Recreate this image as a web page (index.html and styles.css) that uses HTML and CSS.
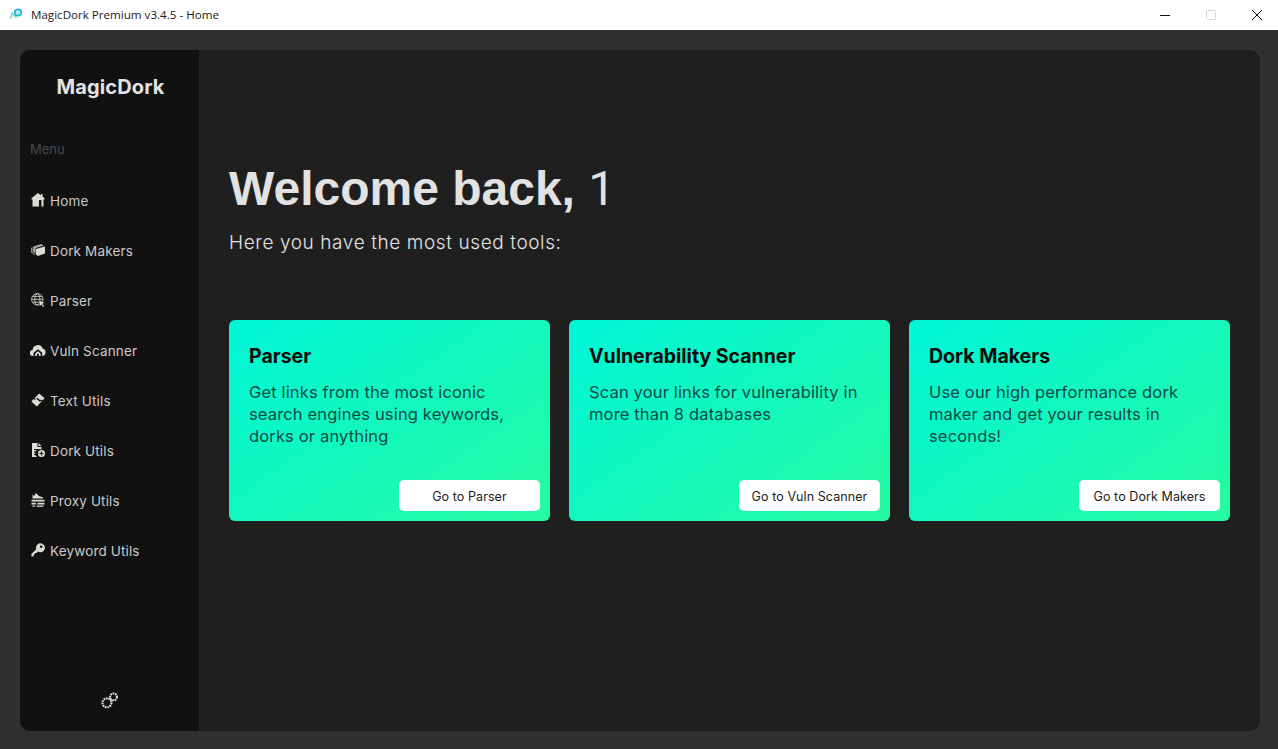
FILE: index.html
```html
<!DOCTYPE html>
<html lang="en">
<head>
    <meta charset="UTF-8">
    <title>MagicDork Premium v3.4.5 - Home</title>
    <link rel="stylesheet" href="styles.css">
</head>
<body>
    <!-- Window title bar -->
    <div class="titlebar">
        <svg class="app-icon" viewBox="0 0 12 12">
            <path d="M.5 11 L2 5 L4 8 L5 4 L6 10" fill="none" stroke="#5fe0cc" stroke-width="1.3"/>
            <circle cx="8" cy="4.5" r="3.2" fill="#bdeef0" stroke="#27b7d0" stroke-width="1.7"/>
        </svg>
        <span class="app-title">MagicDork Premium v3.4.5 - Home</span>
        <div class="window-buttons">
            <svg class="win-btn" viewBox="0 0 12 12"><path d="M1 6.5 H11" stroke="#111" stroke-width="1"/></svg>
            <svg class="win-btn" viewBox="0 0 12 12"><rect x="1.5" y="1.5" width="9" height="9" rx="1" fill="none" stroke="#d8d8cc" stroke-width="1"/></svg>
            <svg class="win-btn" viewBox="0 0 12 12"><path d="M1 1 L11 11 M11 1 L1 11" stroke="#111" stroke-width="1"/></svg>
        </div>
    </div>

    <div class="app">
        <!-- Sidebar -->
        <aside class="sidebar">
            <div class="brand">MagicDork</div>
            <div class="menu-label">Menu</div>
            <nav class="menu">
                <a class="menu-item">
                    <svg class="icon" viewBox="0 0 14 14"><path fill-rule="evenodd" d="M7 0 L10 2.4 V1 H11.5 V3.6 L13.5 5.3 V6.5 H12.5 V13.5 H1.5 V6.5 H.5 V5.3 Z M8 7 V13.5 H10.4 V7 Z"/></svg>
                    <span>Home</span>
                </a>
                <a class="menu-item">
                    <svg class="icon" viewBox="0 0 14 14"><path d="M5 6 L14 3.6 V10.6 L6.8 13 L5 11.4 Z"/><path d="M2.2 3.4 L10.5 1 L12.6 2.8 L4.6 5 V10.8 L2.2 9 Z" opacity=".75"/><path d="M0 4.8 L1.6 4.2 V9.4 L4 11.4 V12.4 L0 9.4 Z" opacity=".6"/></svg>
                    <span>Dork Makers</span>
                </a>
                <a class="menu-item">
                    <svg class="icon icon-line" viewBox="0 0 14 14"><circle cx="6.3" cy="6.3" r="5.7"/><ellipse cx="6.3" cy="6.3" rx="2.5" ry="5.7"/><path d="M.8 6.3 H11.8 M1.6 3.4 H11 M1.6 9.2 H11"/><path class="cursor" d="M7.6 7 L14 9.6 L11.6 10.8 L13.4 13.4 L12 14.4 L10.4 11.8 L8.8 13.6 Z"/></svg>
                    <span>Parser</span>
                </a>
                <a class="menu-item">
                    <svg class="icon icon-wide" viewBox="0 0 16 14"><path d="M3.5 13 H3 A3 3 0 0 1 2.6 7 A5.2 5.2 0 0 1 12.7 5.6 A3.8 3.8 0 0 1 12.6 13 H12.2 V9.8 L8 6.2 L3.5 9.8 Z"/><path fill-rule="evenodd" d="M5.2 13 V10.5 L8 8.3 L10.6 10.5 V13 H8.9 V10.8 H7 V13 Z"/></svg>
                    <span>Vuln Scanner</span>
                </a>
                <a class="menu-item">
                    <svg class="icon" viewBox="0 0 14 14"><path fill-rule="evenodd" d="M8.2 .4 L13.6 5.2 L11.4 7.6 L10 6.4 L9.2 7.2 L10.6 8.4 L5.8 13.4 L.4 8.4 L2.6 6 L4 7.2 L4.8 6.4 L3.4 5.2 Z M6.2 4.4 L9.8 7.8 L8.8 8.8 L5.2 5.4 Z"/></svg>
                    <span>Text Utils</span>
                </a>
                <a class="menu-item">
                    <svg class="icon" viewBox="0 0 14 14"><path d="M1 0 H6.5 V4 H10.5 V6.6 A4.2 4.2 0 0 0 6.2 14 H1 Z M7.5 0 L10.5 3 H7.5 Z"/><path d="M3 6 H7 V7 H3 Z M3 8.5 H6 V9.5 H3 Z M3 11 H5.5 V12 H3 Z" fill="#111"/><circle cx="10.5" cy="10.5" r="3.5"/><path d="M8.5 10.5 H12.5 M10.5 8.5 V12.5" stroke="#111" stroke-width="1.1"/></svg>
                    <span>Dork Utils</span>
                </a>
                <a class="menu-item">
                    <svg class="icon" viewBox="0 0 14 14"><path d="M1.5 5.5 V1.5 L3 3 L5 0 L8 3 L12 4.5 V5.5 Z"/><path d="M.5 6.8 H13.5 V8.6 H.5 Z M.5 9.8 H5 V11.6 H.5 Z M6.5 9.8 H13.5 V11.6 H6.5 Z M1.5 12.6 H4 V13.8 H1.5 Z M5.5 12.6 H12.5 V13.8 H5.5 Z"/></svg>
                    <span>Proxy Utils</span>
                </a>
                <a class="menu-item">
                    <svg class="icon" viewBox="0 0 14 14"><path fill-rule="evenodd" d="M9.2 .3 A4.5 4.5 0 1 1 7 8.6 L5.6 10 H4 V11.6 H2.6 V13.4 H.4 V11 L5.2 6.2 A4.5 4.5 0 0 1 9.2 .3 Z M10.2 2.4 A1.3 1.3 0 1 0 10.2 5 A1.3 1.3 0 1 0 10.2 2.4 Z"/></svg>
                    <span>Keyword Utils</span>
                </a>
            </nav>
            <div class="sidebar-footer">
                <svg class="gears" viewBox="0 0 16 16">
                    <circle class="gear" cx="5.6" cy="10.2" r="4.2"/>
                    <circle class="gear" cx="11.8" cy="4.6" r="3.2"/>
                </svg>
            </div>
        </aside>

        <!-- Main content -->
        <main class="content">
            <h1 class="welcome">Welcome back, <span class="user-name">1</span></h1>
            <p class="subtitle">Here you have the most used tools:</p>

            <div class="cards">
                <div class="card">
                    <h2 class="card-title">Parser</h2>
                    <p class="card-text">Get links from the most iconic search engines using keywords, dorks or anything</p>
                    <button class="card-button">Go to Parser</button>
                </div>
                <div class="card">
                    <h2 class="card-title">Vulnerability Scanner</h2>
                    <p class="card-text">Scan your links for vulnerability in more than 8 databases</p>
                    <button class="card-button">Go to Vuln Scanner</button>
                </div>
                <div class="card">
                    <h2 class="card-title">Dork Makers</h2>
                    <p class="card-text">Use our high performance dork maker and get your results in seconds!</p>
                    <button class="card-button">Go to Dork Makers</button>
                </div>
            </div>
        </main>
    </div>
</body>
</html>
```

FILE: styles.css
```css
/* --- Base --- */
* {
    margin: 0;
    padding: 0;
    box-sizing: border-box;
}

body {
    width: 1278px;
    height: 749px;
    overflow: hidden;
    background: #303030;
    font-family: Inter, 'Noto Sans', sans-serif;
    color: #e0e0e0;
}

/* --- Title bar --- */
.titlebar {
    height: 30px;
    background: #fff;
    display: flex;
    align-items: center;
    padding-left: 10px;
}

.app-icon {
    width: 12px;
    height: 12px;
    margin-top: -2px;
}

.app-title {
    margin-left: 9px;
    font-family: 'Open Sans', sans-serif;
    font-size: 11.6px;
    color: #1a1a1a;
    margin-top: -1px;
}

.window-buttons {
    margin-left: auto;
    display: flex;
    gap: 34px;
    padding-right: 15px;
}

.win-btn {
    width: 12px;
    height: 12px;
}

/* --- Layout --- */
.app {
    height: 681px;
    margin: 20px 18px 0 20px;
    display: flex;
    border-radius: 10px;
    overflow: hidden;
    background: #1f1f1f;
}

/* --- Sidebar --- */
.sidebar {
    width: 179px;
    background: #111;
    display: flex;
    flex-direction: column;
}

.brand {
    margin-top: 25px;
    padding-left: 2px;
    text-align: center;
    font-size: 20px;
    font-weight: 700;
    line-height: 24px;
    letter-spacing: .15px;
    color: #e3e3e3;
}

.menu-label {
    margin: 42px 0 0 10px;
    font-size: 13px;
    line-height: 16px;
    color: #4a4a4a;
}

.menu {
    margin-top: 19px;
    display: flex;
    flex-direction: column;
}

.menu-item {
    height: 50px;
    padding-left: 11px;
    display: flex;
    align-items: center;
    gap: 5px;
    font-size: 13.5px;
    letter-spacing: .15px;
    color: #c9c9c9;
}

.icon {
    width: 14px;
    height: 14px;
    fill: #dcdcd4;
    margin-top: -3px;
    flex-shrink: 0;
}

.icon-wide {
    width: 16px;
    margin-left: -1px;
    margin-right: -1px;
}

.icon-line {
    fill: none;
    stroke: #cfcfc8;
    stroke-width: .9;
}

.cursor {
    fill: #dcdcd4;
    stroke: #111;
    stroke-width: .5;
}

.sidebar-footer {
    margin-top: auto;
    height: 60px;
    display: flex;
    justify-content: center;
    padding-top: 21px;
}

.gears {
    width: 17px;
    height: 17px;
}

.gear {
    fill: none;
    stroke: #e0e0d8;
    stroke-width: 2;
    stroke-dasharray: 1.6 .7;
}

/* --- Content --- */
.content {
    flex: 1;
    padding: 108px 30px 0 30px;
}

.welcome {
    font-family: 'Liberation Sans', sans-serif;
    font-size: 48px;
    font-weight: 700;
    line-height: 62px;
    color: #e2e2e2;
}

.user-name {
    font-family: Roboto, sans-serif;
    font-weight: 400;
}

.subtitle {
    margin-top: 10px;
    font-size: 19px;
    line-height: 26px;
    font-weight: 300;
    letter-spacing: .6px;
    color: #e4e4e4;
}

/* --- Cards --- */
.cards {
    margin-top: 64px;
    display: grid;
    grid-template-columns: repeat(3, 321px);
    gap: 19px;
}

.card {
    position: relative;
    height: 201px;
    padding: 23px 20px 0 20px;
    border-radius: 6px;
    background: linear-gradient(145deg, #00f5d8 0%, #25fba0 100%);
}

.card-title {
    font-size: 19.5px;
    font-weight: 700;
    line-height: 26px;
    color: #0b0b0b;
}

.card-text {
    margin-top: 12px;
    font-size: 16.5px;
    font-weight: 400;
    line-height: 22px;
    letter-spacing: .15px;
    color: #0f4a4a;
}

.card-button {
    position: absolute;
    right: 10px;
    bottom: 10px;
    width: 141px;
    height: 31px;
    padding-top: 1px;
    border: none;
    border-radius: 5px;
    background: #fff;
    font-family: Inter, sans-serif;
    font-size: 12.5px;
    letter-spacing: .08px;
    color: #222;
}
```
